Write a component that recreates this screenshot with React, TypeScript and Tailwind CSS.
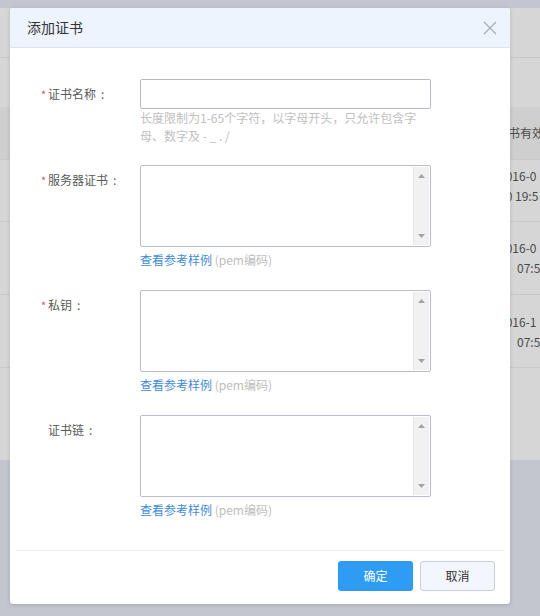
import React from 'react';

const FieldLabel: React.FC<{ text: string; required?: boolean; boxed?: boolean }> = ({ text, required, boxed }) => (
  <div className={`w-[100px] shrink-0 pl-[1px] text-[12px] text-[#5a5a5a] ${boxed ? 'pt-[6px] leading-[18px]' : 'h-[30px] flex items-center'}`}>
    <span className="inline-block w-[7px] text-[#e8505b] text-[11px]">{required ? '*' : ''}</span>
    <span>{text}</span>
    <span className="ml-[5px]">:</span>
  </div>
);

const FakeTextarea: React.FC = () => (
  <div className="w-[291px] h-[82px] border border-[#b9bdd0] rounded-[2px] flex bg-white">
    <textarea className="flex-1 resize-none outline-none overflow-hidden bg-transparent" />
    <div className="w-[16px] my-[1px] mr-[1px] bg-[#f1f1f1] border-l border-[#e6e6e6] flex flex-col justify-between items-center py-[7px]">
      <svg width="7" height="4" viewBox="0 0 7 4">
        <polygon points="3.5,0 7,4 0,4" fill="#a3a3a3" />
      </svg>
      <svg width="7" height="4" viewBox="0 0 7 4">
        <polygon points="0,0 7,0 3.5,4" fill="#a3a3a3" />
      </svg>
    </div>
  </div>
);

const SampleLink: React.FC = () => (
  <div className="mt-[4px] text-[12px] leading-[18px]">
    <span className="text-[#3f8ad8]">查看参考样例</span>
    <span className="text-[#bdbdbd]"> (pem编码)</span>
  </div>
);

export default function App() {
  return (
    <div className="relative w-[540px] h-[616px] overflow-hidden font-['Noto_Sans_CJK_SC','Noto_Sans',sans-serif]">
      {/* dimmed page behind the dialog */}
      <div className="flex flex-col h-full bg-[#c3c5cf]">
        <div className="h-[8px] bg-[#c3c6d0]" />
        <div className="h-[452px] bg-[#d6d6d6] flex flex-col text-[12px] text-[#4a4a4a] whitespace-nowrap">
          <div className="h-[50px] border-b border-[#c9c9c9]" />
          <div className="h-[49px]" />
          <div className="h-[53px] bg-[#cfcfcf] border-b border-[#c9c9c9] pl-[496px] flex items-center">证书有效期</div>
          <div className="h-[62px] border-b border-[#c9c9c9] pl-[499px] pt-[6px] leading-[20px]">
            <div>2016-0</div>
            <div>10 19:5</div>
          </div>
          <div className="h-[73px] border-b border-[#c9c9c9] pl-[499px] pt-[16px] leading-[20px]">
            <div>2016-0</div>
            <div className="pl-[18px]">07:5</div>
          </div>
          <div className="h-[73px] border-b border-[#c9c9c9] pl-[499px] pt-[17px] leading-[20px]">
            <div>2016-1</div>
            <div className="pl-[18px]">07:5</div>
          </div>
        </div>
      </div>

      {/* dialog */}
      <div className="absolute left-[10px] top-[8px] w-[500px] h-[596px] bg-white rounded-[3px] shadow-[0_1px_4px_rgba(0,0,0,0.15)] flex flex-col">
        <div className="h-[40px] shrink-0 bg-[#eef4fd] border-b border-[#dde3ee] rounded-t-[3px] pl-[17px] pr-[13px] flex items-center justify-between">
          <span className="text-[14px] text-[#333]">添加证书</span>
          <svg width="14" height="14" viewBox="0 0 14 14">
            <path d="M1 1L13 13M13 1L1 13" stroke="#a9adb5" strokeWidth="1.3" />
          </svg>
        </div>

        <div className="flex-1 pl-[30px] pt-[31px]">
          <div className="flex">
            <FieldLabel text="证书名称" required />
            <div>
              <input className="w-[291px] h-[30px] border border-[#b4b9cc] rounded-[2px] outline-none px-2 text-[12px]" />
              <div className="w-[280px] text-[12px] leading-[18px] text-[#c0c0c0]">
                长度限制为1-65个字符，以字母开头，只允许包含字母、数字及 - _ . /
              </div>
            </div>
          </div>

          <div className="flex mt-[20px]">
            <FieldLabel text="服务器证书" required boxed />
            <div>
              <FakeTextarea />
              <SampleLink />
            </div>
          </div>

          <div className="flex mt-[21px]">
            <FieldLabel text="私钥" required boxed />
            <div>
              <FakeTextarea />
              <SampleLink />
            </div>
          </div>

          <div className="flex mt-[21px]">
            <FieldLabel text="证书链" boxed />
            <div>
              <FakeTextarea />
              <SampleLink />
            </div>
          </div>
        </div>

        <div className="h-[54px] shrink-0 mx-[6px] border-t border-[#eceef2] pt-[10px] pr-[9px] flex justify-end gap-[7px]">
          <button className="w-[75px] h-[30px] rounded-[3px] bg-[#2f9cf4] text-white text-[12px]">确定</button>
          <button className="w-[75px] h-[30px] rounded-[3px] bg-[#f3f6fc] border border-[#c8cedb] text-[#333] text-[12px]">取消</button>
        </div>
      </div>
    </div>
  );
}
